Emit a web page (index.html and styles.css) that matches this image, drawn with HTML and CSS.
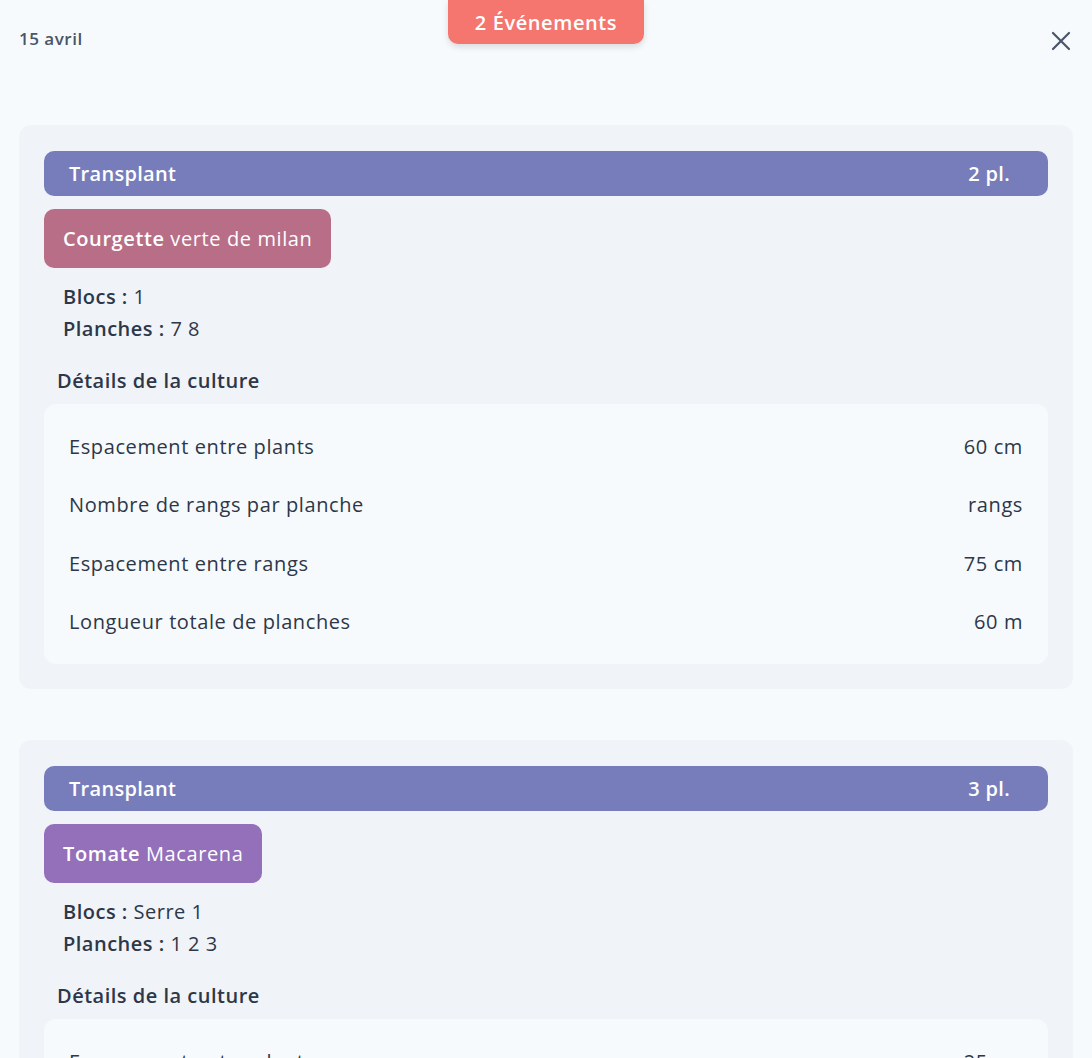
FILE: index.html
```html
<!DOCTYPE html>
<html lang="fr">
<head>
<meta charset="utf-8">
<title>15 avril</title>
<link rel="stylesheet" href="styles.css">
</head>
<body>
<div class="modal">
  <div class="badge">2 Événements</div>
  <header class="header">
    <span class="date">15 avril</span>
    <button class="close" aria-label="Fermer">
      <svg width="20" height="20" viewBox="0 0 20 20"><path d="M2 2 L18 18 M18 2 L2 18" stroke="#4a5568" stroke-width="2.2" stroke-linecap="round" fill="none"/></svg>
    </button>
  </header>

  <section class="event">
    <div class="bar"><span>Transplant</span><span>2 pl.</span></div>
    <div class="tag courgette"><b>Courgette</b> verte de milan</div>
    <div class="meta">
      <div><b>Blocs :</b> 1</div>
      <div><b>Planches :</b> 7 8</div>
    </div>
    <h3 class="details-title">Détails de la culture</h3>
    <div class="details">
      <div class="row"><span>Espacement entre plants</span><span>60 cm</span></div>
      <div class="row"><span>Nombre de rangs par planche</span><span>rangs</span></div>
      <div class="row"><span>Espacement entre rangs</span><span>75 cm</span></div>
      <div class="row"><span>Longueur totale de planches</span><span>60 m</span></div>
    </div>
  </section>

  <section class="event">
    <div class="bar"><span>Transplant</span><span>3 pl.</span></div>
    <div class="tag tomate"><b>Tomate</b> Macarena</div>
    <div class="meta">
      <div><b>Blocs :</b> Serre 1</div>
      <div><b>Planches :</b> 1 2 3</div>
    </div>
    <h3 class="details-title">Détails de la culture</h3>
    <div class="details">
      <div class="row"><span>Espacement entre plants</span><span>25 cm</span></div>
      <div class="row"><span>Nombre de rangs par planche</span><span>rangs</span></div>
      <div class="row"><span>Espacement entre rangs</span><span>75 cm</span></div>
      <div class="row"><span>Longueur totale de planches</span><span>60 m</span></div>
    </div>
  </section>
</div>
</body>
</html>
```

FILE: styles.css
```css
* { box-sizing: border-box; }
html, body {
  margin: 0;
  padding: 0;
  background: #f7fafc;
  font-family: "Open Sans", "Noto Sans", sans-serif;
  color: #2d3748;
}
body { overflow: hidden; }
.modal {
  position: relative;
  padding: 0 19px 40px 19px;
}
.badge {
  position: absolute;
  top: 0;
  left: 448px;
  width: 196px;
  height: 44px;
  background: #f4766f;
  color: #fff;
  font-weight: 600;
  font-size: 20px;
  letter-spacing: 0.6px;
  display: flex;
  align-items: center;
  justify-content: center;
  border-radius: 0 0 10px 10px;
  box-shadow: 0 3px 6px rgba(0,0,0,0.12);
}
.header {
  height: 125px;
  display: flex;
  justify-content: space-between;
  align-items: flex-start;
  padding-top: 26px;
}
.date {
  font-size: 17px;
  font-weight: 600;
  letter-spacing: 0.5px;
  color: #4a5568;
  line-height: 26px;
}
.close {
  border: 0;
  background: none;
  padding: 0;
  margin-top: 5px;
  margin-right: 2px;
  width: 20px;
  height: 20px;
  cursor: pointer;
}
.event {
  background: #f0f3f8;
  border-radius: 12px;
  padding: 26px 25px 25px 25px;
  margin-bottom: 51px;
}
.bar {
  background: #777dba;
  color: #fff;
  border-radius: 10px;
  height: 45px;
  display: flex;
  align-items: center;
  justify-content: space-between;
  padding: 0 38px 0 25px;
  font-weight: 600;
  font-size: 20px;
  letter-spacing: 0.3px;
}
.tag {
  display: inline-block;
  margin-top: 13px;
  color: #fff;
  border-radius: 10px;
  font-size: 20px;
  letter-spacing: 0.6px;
  line-height: 27px;
  padding: 16px 19px;
}
.tag b { font-weight: 600; }
.courgette { background: #b86e86; }
.tomate { background: #9370b9; }
.meta {
  padding: 13px 0 0 19px;
  font-size: 20px;
  letter-spacing: 0.5px;
  line-height: 32px;
  color: #2d3748;
}
.meta b { font-weight: 600; }
.details-title {
  margin: 22px 0 9px 13px;
  font-size: 20px;
  letter-spacing: 0.5px;
  font-weight: 600;
  line-height: 28px;
  color: #2d3748;
}
.details {
  background: #f7fafc;
  border-radius: 12px;
  padding: 13px 25px 13px 25px;
}
.row {
  display: flex;
  justify-content: space-between;
  align-items: center;
  height: 58.5px;
  font-size: 20px;
  letter-spacing: 0.6px;
  color: #2d3748;
}
```
